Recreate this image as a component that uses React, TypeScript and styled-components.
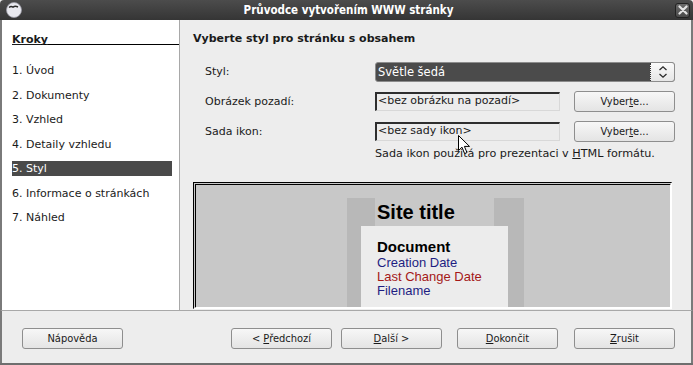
import React from "react";
import styled, { createGlobalStyle } from "styled-components";

const GlobalStyle = createGlobalStyle`
  html, body {
    margin: 0;
    padding: 0;
    background: #ededed;
  }
  body {
    font-family: "DejaVu Sans", "Liberation Sans", sans-serif;
    font-size: 11px;
    color: #1a1a1a;
  }
`;

const steps = [
  "1. Úvod",
  "2. Dokumenty",
  "3. Vzhled",
  "4. Detaily vzhledu",
  "5. Styl",
  "6. Informace o stránkách",
  "7. Náhled",
];

const App = () => {
  return (
    <>
      <GlobalStyle />
      <Window>
        <TitleBar>
          <AppIcon>
            <svg width="16" height="16" viewBox="0 0 16 16">
              <circle cx="8" cy="8" r="7.5" fill="#e9e9ef" />
              <circle cx="8" cy="8" r="7.5" fill="none" stroke="#9a9aa6" strokeWidth="0.8" />
              <path d="M3 5.5 Q5 3.8 7 5.2 Q9 3.5 12 5" stroke="#2a2a2a" strokeWidth="1.4" fill="none" />
            </svg>
          </AppIcon>
          <Title>Průvodce vytvořením WWW stránky</Title>
          <CloseButton>
            <svg width="10" height="10" viewBox="0 0 10 10">
              <path d="M1.5 1.5 L8.5 8.5 M8.5 1.5 L1.5 8.5" stroke="#e4e4e4" strokeWidth="2.2" strokeLinecap="round" />
            </svg>
          </CloseButton>
        </TitleBar>
        <Body>
          <Sidebar>
            <SidebarHeader>
              <span>Kroky</span>
            </SidebarHeader>
            <StepList>
              {steps.map((s, i) => (
                <Step key={s} $active={i === 4}>
                  {s}
                </Step>
              ))}
            </StepList>
          </Sidebar>
          <Content>
            <Heading>Vyberte styl pro stránku s obsahem</Heading>
            <Form>
              <Label>Styl:</Label>
              <Select>
                <SelectValue>Světle šedá</SelectValue>
                <Spinner>
                  <svg width="12" height="14" viewBox="0 0 12 14">
                    <path d="M2.5 5 L6 1.8 L9.5 5 M2.5 9 L6 12.2 L9.5 9" stroke="#2a2a2a" strokeWidth="1.3" fill="none" />
                  </svg>
                </Spinner>
              </Select>

              <Label>Obrázek pozadí:</Label>
              <Field>&lt;bez obrázku na pozadí&gt;</Field>
              <Button>
                <span>
                  Vyber<u>t</u>e...
                </span>
              </Button>

              <Label>Sada ikon:</Label>
              <Field>&lt;bez sady ikon&gt;</Field>
              <Button>
                <span>
                  Vyber<u>t</u>e...
                </span>
              </Button>

              <Help>
                Sada ikon použitá pro prezentaci v <u>H</u>TML formátu.
              </Help>
            </Form>
            <Preview>
              <PageFrame>
                <PageHeader>
                  <SiteTitle>Site title</SiteTitle>
                </PageHeader>
                <DocBox>
                  <DocTitle>Document</DocTitle>
                  <DocLine $color="#1e1e82">Creation Date</DocLine>
                  <DocLine $color="#a41818">Last Change Date</DocLine>
                  <DocLine $color="#1e1e82">Filename</DocLine>
                </DocBox>
              </PageFrame>
            </Preview>
            <Cursor>
              <svg width="13" height="20" viewBox="0 0 13 20">
                <path d="M0.5 0.5 L0.5 15.5 L4 12.2 L6.6 18.6 L9 17.6 L6.4 11.4 L11.5 11.4 Z" fill="#ffffff" stroke="#000" strokeWidth="1" strokeLinejoin="round" />
              </svg>
            </Cursor>
          </Content>
        </Body>
        <Footer>
          <Button $w={101}>Nápověda</Button>
          <FooterRight>
            <Button $w={101}>
              <span>
                &lt; <u>P</u>ředchozí
              </span>
            </Button>
            <Button $w={101} $gap={9}>
              <span>
                <u>D</u>alší &gt;
              </span>
            </Button>
            <Button $w={101} $gap={15}>
              <span>
                <u>D</u>okončit
              </span>
            </Button>
            <Button $w={101} $gap={16}>
              <span>
                <u>Z</u>rušit
              </span>
            </Button>
          </FooterRight>
        </Footer>
      </Window>
    </>
  );
};

export default App;

const Window = styled.div`
  width: 693px;
  height: 365px;
  display: flex;
  flex-direction: column;
  background: #ededed;
  box-sizing: border-box;
  border-bottom: 2px solid #6e6e6e;
  overflow: hidden;
`;

const TitleBar = styled.div`
  height: 20px;
  flex: none;
  display: flex;
  align-items: center;
  padding: 0 3px 0 6px;
  background: linear-gradient(#4c4c4c, #353535);
  border-radius: 4px 4px 0 0;
`;

const AppIcon = styled.div`
  width: 16px;
  height: 16px;
  display: flex;
`;

const Title = styled.div`
  flex: 1;
  text-align: center;
  color: #ffffff;
  font-weight: bold;
  font-size: 11.5px;
  font-stretch: condensed;
  font-family: "DejaVu Sans Condensed", "DejaVu Sans", sans-serif;
`;

const CloseButton = styled.div`
  width: 15px;
  height: 15px;
  box-sizing: border-box;
  border: 1px solid #222;
  border-radius: 3px;
  background: linear-gradient(#6a6a6a, #4a4a4a);
  display: flex;
  align-items: center;
  justify-content: center;
`;

const Body = styled.div`
  flex: 1;
  display: flex;
  border-left: 2px solid #7a7a7a;
  border-right: 2px solid #7a7a7a;
  border-bottom: 1px solid #a8a8a8;
  min-height: 0;
`;

const Sidebar = styled.div`
  width: 178px;
  flex: none;
  background: #ffffff;
  border-right: 1px solid #a8a8a8;
  padding-left: 10px;
  box-sizing: border-box;
`;

const SidebarHeader = styled.div`
  height: 14px;
  padding-top: 10px;
  box-sizing: content-box;
  border-bottom: 1px solid #000;
  display: flex;
  align-items: flex-end;
  & > span {
    font-weight: bold;
    text-decoration: underline;
    line-height: 14px;
    margin-bottom: -3px;
  }
`;

const StepList = styled.div`
  display: flex;
  flex-direction: column;
  gap: 9.5px;
  padding-top: 18px;
`;

const Step = styled.div<{ $active?: boolean }>`
  height: 15px;
  line-height: 15px;
  width: 160px;
  background: ${(p) => (p.$active ? "#4a4a4a" : "transparent")};
  color: ${(p) => (p.$active ? "#ffffff" : "#1a1a1a")};
`;

const Content = styled.div`
  flex: 1;
  position: relative;
  padding: 12px 0 0 13px;
  box-sizing: border-box;
`;

const Heading = styled.div`
  font-weight: bold;
  line-height: 14px;
`;

const Form = styled.div`
  display: grid;
  grid-template-columns: 170px 185px 14px 101px;
  grid-auto-rows: auto;
  row-gap: 9px;
  align-items: center;
  margin: 16px 0 0 12px;
  & > :nth-child(2) {
    grid-column: 2 / 5;
  }
  & > :nth-child(4), & > :nth-child(7) {
    grid-column: 2;
  }
  & > :nth-child(5), & > :nth-child(8) {
    grid-column: 4;
  }
`;

const Label = styled.div`
  grid-column: 1;
  line-height: 14px;
`;

const Select = styled.div`
  height: 20px;
  box-sizing: border-box;
  display: flex;
  border: 1px solid #8c8c8c;
  border-radius: 3px;
  background: #4b4b4b;
  overflow: hidden;
`;

const SelectValue = styled.div`
  flex: 1;
  color: #ffffff;
  font-size: 11.5px;
  line-height: 18px;
  padding-left: 2px;
`;

const Spinner = styled.div`
  width: 23px;
  display: flex;
  align-items: center;
  justify-content: center;
  background: linear-gradient(#fafafa, #e6e6e6);
  border-left: 1px dotted #333;
`;

const Field = styled.div`
  height: 19px;
  box-sizing: border-box;
  border-top: 2px solid #2e2e2e;
  border-left: 2px solid #2e2e2e;
  border-right: 1px solid #d8d8d8;
  border-bottom: 1px solid #d8d8d8;
  background: #ececec;
  line-height: 14px;
  padding-left: 1px;
  white-space: nowrap;
  overflow: hidden;
`;

const Button = styled.div<{ $w?: number; $gap?: number }>`
  width: ${(p) => (p.$w ? `${p.$w}px` : "auto")};
  margin-left: ${(p) => (p.$gap ? `${p.$gap}px` : "0")};
  height: 21px;
  box-sizing: border-box;
  border: 1px solid #8e8e8e;
  border-radius: 3px;
  background: linear-gradient(#f7f7f7, #e4e4e4);
  display: flex;
  align-items: center;
  justify-content: center;
  font-family: "DejaVu Sans Condensed", "DejaVu Sans", sans-serif;
  font-stretch: condensed;
  font-size: 11px;
  color: #1a1a1a;
  white-space: pre;
`;

const Help = styled.div`
  grid-column: 2 / 5;
  margin-top: -4px;
  line-height: 14px;
  font-size: 11.2px;
`;

const Preview = styled.div`
  width: 479px;
  height: 127px;
  box-sizing: border-box;
  margin-top: 21px;
  border-top: 3px double #000;
  border-left: 3px double #000;
  border-right: 2px solid #ffffff;
  border-bottom: 2px solid #ffffff;
  background: #c8c8c8;
  overflow: hidden;
  padding: 13px 0 0 151px;
`;

const PageFrame = styled.div`
  width: 177px;
  height: 200px;
  background: #b8b8b8;
`;

const PageHeader = styled.div`
  height: 28px;
  margin: 0 30px 0 28px;
  background: #c8c8c8;
  padding-left: 2px;
`;

const SiteTitle = styled.div`
  font-family: "Liberation Sans", Arial, sans-serif;
  font-weight: bold;
  font-size: 20px;
  line-height: 28px;
  color: #000;
`;

const DocBox = styled.div`
  margin: 0 16px 0 14px;
  height: 120px;
  background: #ececec;
  padding: 12px 0 0 16px;
  box-sizing: border-box;
  font-family: "Liberation Sans", Arial, sans-serif;
`;

const DocTitle = styled.div`
  font-weight: bold;
  font-size: 15px;
  line-height: 18px;
  color: #000;
`;

const DocLine = styled.div<{ $color: string }>`
  font-size: 13px;
  line-height: 14px;
  color: ${(p) => p.$color};
`;

const Cursor = styled.div`
  position: absolute;
  left: 278px;
  top: 115px;
  width: 13px;
  height: 20px;
  display: flex;
`;

const Footer = styled.div`
  height: 52px;
  flex: none;
  display: flex;
  align-items: center;
  padding: 2px 16px 0 20px;
  box-sizing: border-box;
  border-left: 2px solid #7a7a7a;
  border-right: 2px solid #7a7a7a;
`;

const FooterRight = styled.div`
  margin-left: auto;
  display: flex;
  align-items: center;
`;
